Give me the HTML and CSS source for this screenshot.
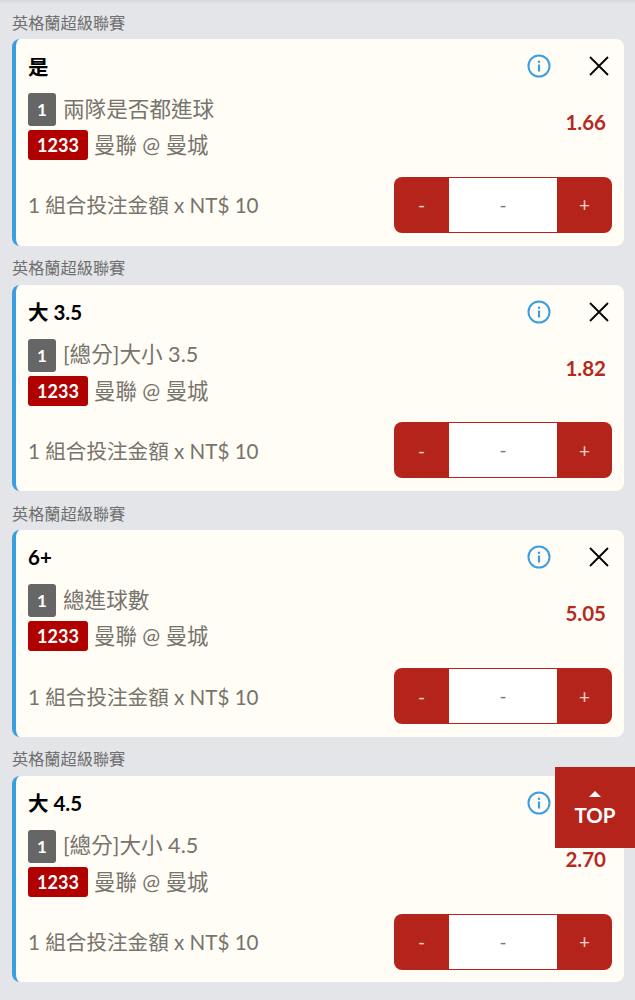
FILE: index.html
```html
<!DOCTYPE html>
<html lang="zh-Hant">
<head>
    <meta charset="UTF-8">
    <meta name="viewport" content="width=device-width, initial-scale=1.0">
    <title>投注單</title>
    <link rel="stylesheet" href="styles.css">
</head>
<body>

    <div class="top-shade"></div>

    <section class="bet">
        <div class="league">英格蘭超級聯賽</div>
        <div class="card">
            <div class="card-head">
                <span class="pick">是</span>
                <svg class="info" viewBox="0 0 24 24"><circle cx="12" cy="12" r="10.5"/><rect class="dot" x="10.8" y="6.5" width="2.4" height="2.4" rx="1.2"/><rect class="dot" x="10.9" y="10.5" width="2.2" height="7"/></svg>
                <svg class="close" viewBox="0 0 20 20"><path d="M1 1L19 19M19 1L1 19"/></svg>
            </div>
            <div class="card-mid">
                <div class="lines">
                    <div class="line"><span class="num">1</span><span class="market">兩隊是否都進球</span></div>
                    <div class="line"><span class="code">1233</span>曼聯 @ 曼城</div>
                </div>
                <div class="odds">1.66</div>
            </div>
            <div class="card-foot">
                <span class="stake">1 組合投注金額 x NT$ 10</span>
                <div class="stepper">
                    <button class="step">-</button>
                    <div class="amount">-</div>
                    <button class="step">+</button>
                </div>
            </div>
        </div>
    </section>

    <section class="bet">
        <div class="league">英格蘭超級聯賽</div>
        <div class="card">
            <div class="card-head">
                <span class="pick">大 3.5</span>
                <svg class="info" viewBox="0 0 24 24"><circle cx="12" cy="12" r="10.5"/><rect class="dot" x="10.8" y="6.5" width="2.4" height="2.4" rx="1.2"/><rect class="dot" x="10.9" y="10.5" width="2.2" height="7"/></svg>
                <svg class="close" viewBox="0 0 20 20"><path d="M1 1L19 19M19 1L1 19"/></svg>
            </div>
            <div class="card-mid">
                <div class="lines">
                    <div class="line"><span class="num">1</span><span class="market">[總分]大小 3.5</span></div>
                    <div class="line"><span class="code">1233</span>曼聯 @ 曼城</div>
                </div>
                <div class="odds">1.82</div>
            </div>
            <div class="card-foot">
                <span class="stake">1 組合投注金額 x NT$ 10</span>
                <div class="stepper">
                    <button class="step">-</button>
                    <div class="amount">-</div>
                    <button class="step">+</button>
                </div>
            </div>
        </div>
    </section>

    <section class="bet">
        <div class="league">英格蘭超級聯賽</div>
        <div class="card">
            <div class="card-head">
                <span class="pick">6+</span>
                <svg class="info" viewBox="0 0 24 24"><circle cx="12" cy="12" r="10.5"/><rect class="dot" x="10.8" y="6.5" width="2.4" height="2.4" rx="1.2"/><rect class="dot" x="10.9" y="10.5" width="2.2" height="7"/></svg>
                <svg class="close" viewBox="0 0 20 20"><path d="M1 1L19 19M19 1L1 19"/></svg>
            </div>
            <div class="card-mid">
                <div class="lines">
                    <div class="line"><span class="num">1</span><span class="market">總進球數</span></div>
                    <div class="line"><span class="code">1233</span>曼聯 @ 曼城</div>
                </div>
                <div class="odds">5.05</div>
            </div>
            <div class="card-foot">
                <span class="stake">1 組合投注金額 x NT$ 10</span>
                <div class="stepper">
                    <button class="step">-</button>
                    <div class="amount">-</div>
                    <button class="step">+</button>
                </div>
            </div>
        </div>
    </section>

    <section class="bet">
        <div class="league">英格蘭超級聯賽</div>
        <div class="card">
            <div class="card-head">
                <span class="pick">大 4.5</span>
                <svg class="info" viewBox="0 0 24 24"><circle cx="12" cy="12" r="10.5"/><rect class="dot" x="10.8" y="6.5" width="2.4" height="2.4" rx="1.2"/><rect class="dot" x="10.9" y="10.5" width="2.2" height="7"/></svg>
                <svg class="close" viewBox="0 0 20 20"><path d="M1 1L19 19M19 1L1 19"/></svg>
            </div>
            <div class="card-mid">
                <div class="lines">
                    <div class="line"><span class="num">1</span><span class="market">[總分]大小 4.5</span></div>
                    <div class="line"><span class="code">1233</span>曼聯 @ 曼城</div>
                </div>
                <div class="odds">2.70</div>
            </div>
            <div class="card-foot">
                <span class="stake">1 組合投注金額 x NT$ 10</span>
                <div class="stepper">
                    <button class="step">-</button>
                    <div class="amount">-</div>
                    <button class="step">+</button>
                </div>
            </div>
        </div>
    </section>

    <a class="to-top" href="#">
        <span class="to-top-arrow"></span>
        TOP
    </a>

</body>
</html>
```

FILE: styles.css
```css
/* General */
body {
    margin: 0;
    padding: 0 11px 18px 12px;
    background: #e3e5e8;
    color: #77736d;
    font-family: Lato, "Noto Sans CJK TC", sans-serif;
}

.top-shade {
    position: absolute;
    top: 0;
    left: 0;
    right: 0;
    height: 4px;
    background: linear-gradient(#d6d8db, #e3e5e8);
}

/* One bet */
.league {
    height: 39.1px;
    padding-top: 12.5px;
    box-sizing: border-box;
    font-size: 16.2px;
    line-height: 20px;
    color: #6f6f6f;
}

.card {
    height: 206.5px;
    box-sizing: border-box;
    padding: 13px 12px 0 12px;
    background: #fffdf5;
    border-left: 4px solid #3a9ee0;
    border-radius: 8px;
}

.card-head {
    display: flex;
    align-items: center;
    height: 28px;
}

.pick {
    flex: 1;
    padding-bottom: 1px;
    font-size: 20.5px;
    font-weight: 700;
    color: #000;
}

.info {
    width: 24px;
    height: 24px;
    margin-right: 38px;
}

.info circle {
    fill: none;
    stroke: #3a9ee0;
    stroke-width: 2;
}

.info .dot {
    fill: #3a9ee0;
}

.close {
    width: 20px;
    height: 20px;
    margin-right: 3px;
}

.close path {
    fill: none;
    stroke: #000;
    stroke-width: 1.8;
}

/* Market and match */
.card-mid {
    display: flex;
    align-items: center;
    justify-content: space-between;
    margin-top: 13px;
}

.lines {
    display: flex;
    flex-direction: column;
    gap: 4px;
}

.line {
    display: flex;
    align-items: center;
    font-size: 21.4px;
    line-height: 30px;
}

.market {
    padding-bottom: 2px;
    font-size: 21.6px;
}

.num {
    width: 28px;
    height: 33px;
    margin-right: 7px;
    background: #666;
    border-radius: 3px;
    color: #fff;
    font-size: 17px;
    font-weight: 700;
    line-height: 33px;
    text-align: center;
}

.code {
    width: 60px;
    height: 30px;
    margin-right: 6px;
    background: #b00000;
    border-radius: 3px;
    color: #fff;
    font-size: 18px;
    font-weight: 700;
    line-height: 30px;
    text-align: center;
}

.odds {
    margin-right: 6px;
    padding-bottom: 9px;
    color: #b5291f;
    font-size: 20.5px;
    font-weight: 700;
}

/* Stake */
.card-foot {
    display: flex;
    align-items: center;
    justify-content: space-between;
    margin-top: 16.8px;
}

.stake {
    padding-bottom: 1px;
    font-size: 20.6px;
}

.stepper {
    display: flex;
    width: 218px;
    height: 56px;
    background: #b5241a;
    border-radius: 8px;
    overflow: hidden;
}

.step {
    width: 55px;
    padding: 0;
    border: none;
    background: none;
    color: #f0d2cc;
    font-family: inherit;
    font-size: 19px;
}

.amount {
    flex: 1;
    margin: 1px 0;
    background: #fff;
    color: #777;
    font-size: 19px;
    line-height: 54px;
    text-align: center;
}

/* Back to top */
.to-top {
    position: fixed;
    top: 767px;
    right: 0;
    width: 80px;
    height: 81px;
    padding-top: 24px;
    box-sizing: border-box;
    background: #b5241a;
    color: #fff;
    font-size: 20.5px;
    font-weight: 700;
    line-height: 28px;
    text-align: center;
    text-decoration: none;
}

.to-top-arrow {
    display: block;
    width: 0;
    margin: 0 auto 4px;
    border-left: 6px solid transparent;
    border-right: 6px solid transparent;
    border-bottom: 6px solid #fff;
}
```
